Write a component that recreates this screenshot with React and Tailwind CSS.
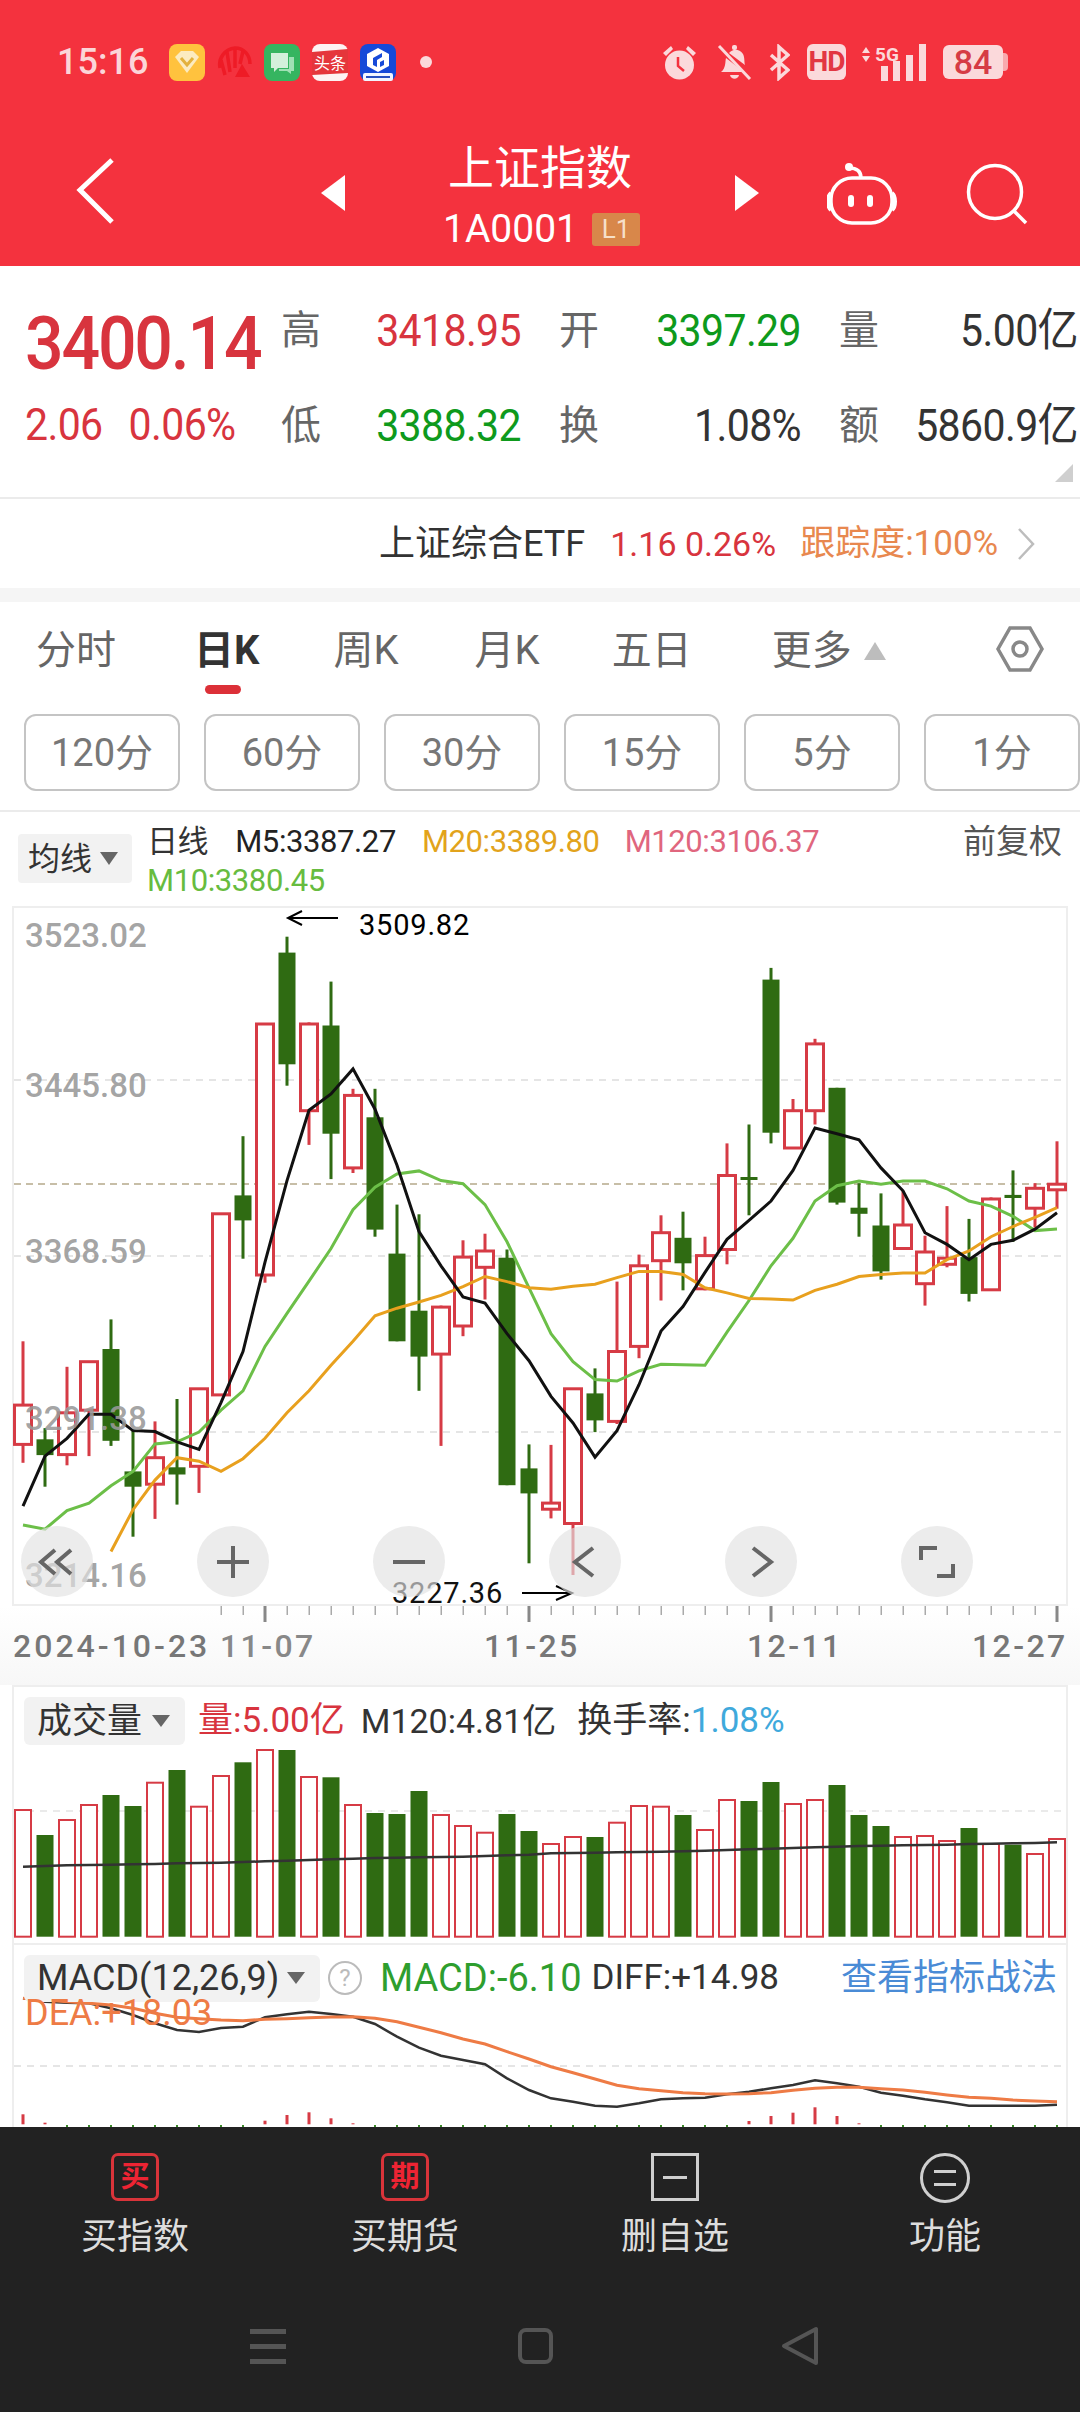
import React from "react";

const X = (i) => 23 + 22 * i;
const Y = (z) => +(900 + z / 1.96).toFixed(1);
const V = (z) => +(1680 + z / 3).toFixed(1);
const RED = "#D63B45";
const GREEN = "#2F6B12";

const candles = [
  ["r",865,990,1067,1103],["g",1035,1057,1088,1150],["r",915,1005,1087,1108],["r",905,905,1000,1090],
  ["g",822,880,1060,1070],["g",1040,1120,1150,1248],["r",1022,1093,1145,1213],["g",978,1112,1126,1185],
  ["r",958,958,1110,1162],["r",615,615,970,970],["g",463,579,628,703],["r",243,243,735,750],
  ["g",72,103,322,364],["r",240,243,413,480],["g",160,246,458,547],["r",370,383,525,535],
  ["g",370,426,646,660],["g",597,693,865,865],["g",616,805,895,962],["r",795,798,890,1070],
  ["r",667,700,835,855],["r",654,688,720,783],["g",685,701,1147,1147],["g",1067,1114,1163,1300],
  ["r",1068,1182,1194,1212],["r",958,958,1222,1323],["g",918,967,1020,1043],["r",748,885,1022,1027],
  ["r",695,717,875,898],["r",618,652,707,785],["g",611,662,712,765],["r",660,697,762,765],
  ["r",477,540,685,714],["g",440,543,547,618],["g",133,156,456,477],["r",390,413,486,486],
  ["r",272,282,413,440],["g",368,368,593,597],["g",555,603,615,660],["g",575,638,728,744],
  ["r",570,637,683,683],["r",658,690,752,795],["r",600,702,714,720],["g",625,700,772,787],
  ["r",583,586,764,764],["g",530,578,584,670],["r",555,565,604,642],["r",473,557,568,605],
];

const m5 = [1188,1090,1055,1008,1008,1040,1042,1062,1077,985,885,710,550,412,380,331,410,520,650,717,778,790,850,903,973,1025,1092,1040,950,845,797,730,665,628,590,530,447,458,470,525,570,652,675,705,675,667,645,613];
const m10 = [1225,1233,1197,1182,1148,1120,1066,1062,1043,1000,962,875,810,747,683,607,563,537,531,550,556,597,670,760,850,905,940,943,923,910,911,912,847,785,717,663,590,560,551,557,551,551,566,590,600,620,648,645];
const m20 = [1277,1195,1137,1093,1100,1120,1095,1055,1005,962,912,865,815,800,788,775,758,738,748,760,763,757,753,740,728,728,734,760,770,781,782,784,765,753,738,734,731,731,705,688,660,640,622,603];

const vols = [
  ["r",390],["g",465],["r",420],["r",375],["g",345],["g",378],["r",308],["g",270],["r",380],["r",288],["g",247],["r",210],
  ["g",210],["r",291],["g",292],["r",375],["g",399],["g",402],["g",333],["r",405],["r",438],["r",458],["g",402],["g",453],
  ["r",492],["r",471],["g",471],["r",428],["r",378],["r",380],["g",405],["r",450],["r",360],["g",363],["g",306],["r",372],
  ["r",360],["g",315],["g",405],["g",438],["r",471],["r",468],["r",483],["g",444],["r",492],["g",494],["r",522],["r",477],
];
const volLine = [560,558,556,555,554,553,552,550,549,548,546,544,542,540,538,536,534,533,532,531,530,528,526,524,520,519,518,517,516,515,514,512,510,508,506,504,502,500,498,497,496,495,494,492,491,490,489,487];

const difLine = [955,965,968,970,985,1005,1030,1050,1056,1044,1040,1012,1003,995,1002,1010,1032,1070,1103,1127,1140,1153,1195,1230,1255,1265,1277,1280,1270,1258,1255,1253,1243,1235,1225,1215,1201,1210,1220,1238,1247,1258,1267,1277,1277,1277,1277,1274];
const deaLine = [955,960,965,970,975,985,1000,1012,1016,1020,1022,1018,1016,1013,1011,1010,1015,1025,1042,1058,1077,1092,1115,1137,1160,1178,1197,1216,1226,1232,1238,1241,1242,1241,1238,1231,1225,1222,1222,1226,1230,1237,1245,1252,1255,1260,1263,1265];
const macdRed = { 0: 1303, 1: 1328, 11: 1322, 12: 1305, 13: 1297, 14: 1315, 15: 1330, 33: 1323, 34: 1308, 35: 1298, 36: 1282, 37: 1308, 38: 1330 };

const pts = (arr, fy, start = 0) => arr.map((z, i) => `${X(i + start)},${fy(z)}`).join(" ");

function Yellow() {
  return (
    <svg width="36" height="37" viewBox="0 0 36 37">
      <rect x="0" y="0" width="36" height="37" rx="8" fill="#FFC23E" />
      <path d="M6 13 L12 7 H24 L30 13 L18 29 Z" fill="#FCEBC0" />
      <path d="M12 14 L18 21 L24 14" fill="none" stroke="#E3B13C" strokeWidth="3" />
    </svg>
  );
}
function Shell() {
  return (
    <svg width="35" height="37" viewBox="0 0 35 37" fill="none" stroke="#EE1B26" strokeWidth="3.5">
      <path d="M3 24 C1 14 8 5 18 4 C27 4 33 11 33 20" />
      <path d="M8 31 L4 16 M13 28 L10 8 M18 24 L18 5 M23 20 L26 7" />
      <path d="M25 20 L33 33 H18 Z" fill="#EE1B26" stroke="none" />
    </svg>
  );
}
function Chat() {
  return (
    <svg width="36" height="37" viewBox="0 0 36 37">
      <rect width="36" height="37" rx="8" fill="#35B560" />
      <path d="M7 9 H24 V24 H14 L10 28 V24 H7 Z" fill="#D3F0DB" />
      <path d="M25 13 H30 V27 H27 V30 L23 27 H15 V25 H25 Z" fill="#9FE0B4" />
    </svg>
  );
}
function Toutiao() {
  return (
    <svg width="36" height="37" viewBox="0 0 36 37">
      <rect width="36" height="37" rx="8" fill="#FDF3F3" />
      <path d="M0 8 L36 5 V29 L0 31 Z" fill="#E5363B" />
      <text x="18" y="25" textAnchor="middle" fontSize="16" fill="#FFF" fontFamily="'Noto Sans CJK SC',sans-serif">头条</text>
    </svg>
  );
}
function Blue() {
  return (
    <svg width="36" height="37" viewBox="0 0 36 37">
      <rect width="36" height="37" rx="8" fill="#1649D8" />
      <path d="M18 4 L29 10 V22 L18 28 L7 22 V10 Z" fill="#FFF" />
      <path d="M22 9 L13 14 V21 L17 23 V16 L22 13 Z M20 18 L24 16 V21 L20 23 Z" fill="#1649D8" />
      <rect x="3" y="29" width="30" height="8" rx="2" fill="#F2F5FF" />
      <rect x="6" y="32" width="24" height="2" fill="#274FC0" />
    </svg>
  );
}

function Alarm() {
  return (
    <svg width="35" height="37" viewBox="0 0 35 37" fill="#FBD9DB">
      <circle cx="17.5" cy="21" r="14.5" />
      <path d="M1 9 L9 2 L11 5 L4 12 Z M34 9 L26 2 L24 5 L31 12 Z" />
      <path d="M16 13 V22 L22 27" fill="none" stroke="#F4323E" strokeWidth="2.5" />
    </svg>
  );
}
function Bell() {
  return (
    <svg width="35" height="37" viewBox="0 0 35 37" fill="#FBD9DB">
      <path d="M4 28 C9 24 8 18 9 14 L27 28 Z M12 9 C15 5 22 4 26 10 C28 14 27 18 28 21 Z" />
      <rect x="15" y="1" width="5" height="5" rx="2" />
      <path d="M13 31 H22 C21 36 14 36 13 31 Z" />
      <path d="M2 2 L33 35" stroke="#FBD9DB" strokeWidth="3" />
    </svg>
  );
}
function Bluetooth() {
  return (
    <svg width="21" height="37" viewBox="0 0 21 37" fill="none" stroke="#FBD9DB" strokeWidth="3.5">
      <path d="M2 11 L19 26 L10 34 V3 L19 11 L2 26" />
    </svg>
  );
}
function Signal() {
  return (
    <svg width="67" height="37" viewBox="0 0 67 37" fill="#FBD9DB">
      <path d="M2 9 L6 3 L10 9 Z M2 12 L6 18 L10 12 Z" />
      <rect x="21" y="22" width="7" height="15" />
      <rect x="33" y="17" width="7" height="20" />
      <rect x="46" y="11" width="7" height="26" />
      <rect x="59" y="0" width="7" height="37" />
      <text x="15" y="17" fontSize="19" fontWeight="700" fontFamily="Roboto,sans-serif">5G</text>
    </svg>
  );
}

function Robot() {
  return (
    <svg width="70" height="65" viewBox="827 160 70 65" fill="none" stroke="#fff" strokeWidth="3.5">
      <rect x="831" y="176" width="61" height="45" rx="21" />
      <path d="M849 166 C856 166 861 169 861 176" />
      <circle cx="849" cy="165" r="4" fill="#fff" stroke="none" />
      <rect x="848" y="193" width="6" height="12" rx="3" fill="#fff" stroke="none" />
      <rect x="867" y="193" width="6" height="12" rx="3" fill="#fff" stroke="none" />
      <path d="M831 191 C827 194 827 205 831 208 M892 191 C896 194 896 205 892 208" strokeWidth="4" />
    </svg>
  );
}

function CandleChart() {
  return (
    <svg className="absolute inset-0" width="1080" height="700" viewBox="0 906 1080 700">
      <g stroke="#DDDDDD" strokeWidth="1.5" strokeDasharray="7 6">
        <line x1="14" x2="1064" y1="1080" y2="1080" />
        <line x1="14" x2="1064" y1="1256" y2="1256" />
        <line x1="14" x2="1064" y1="1432" y2="1432" />
      </g>
      <line x1="14" x2="1064" y1="1184" y2="1184" stroke="#B5A98A" strokeWidth="1.5" strokeDasharray="7 5" />
      {candles.map(([t, wt, bt, bb, wb], i) => {
        const x = X(i);
        if (t === "g") {
          return (
            <g key={i} fill={GREEN}>
              <rect x={x - 1.5} y={Y(wt)} width="3" height={Y(wb) - Y(wt)} />
              <rect x={x - 8.5} y={Y(bt)} width="17" height={Math.max(Y(bb) - Y(bt), 3)} />
            </g>
          );
        }
        return (
          <g key={i}>
            <rect x={x - 1.5} y={Y(wt)} width="3" height={Y(wb) - Y(wt)} fill={RED} />
            <rect x={x - 8.5} y={Y(bt)} width="17" height={Math.max(Y(bb) - Y(bt), 3)} fill="#fff" stroke={RED} strokeWidth="3" />
          </g>
        );
      })}
      <polyline points={pts(m10, Y)} fill="none" stroke="#6CBF48" strokeWidth="3" />
      <polyline points={pts(m20, Y, 4)} fill="none" stroke="#E8A01E" strokeWidth="3" />
      <polyline points={pts(m5, Y)} fill="none" stroke="#111" strokeWidth="3" />
      <g fill="none" stroke="#000" strokeWidth="2">
        <path d="M338 918 H288 M302 911 L288 918 L302 925" />
        <path d="M522 1593 H572 M556 1586 L572 1593 L556 1600" />
      </g>
    </svg>
  );
}

function Circle({ cx, children }) {
  return (
    <div className={`absolute top-[620px] w-[72px] h-[71px] rounded-full bg-[#E2E2E2]/65 flex items-center justify-center ${cx}`}>
      <svg width="44" height="44" viewBox="0 0 44 44" fill="none" stroke="#666" strokeWidth="4">
        {children}
      </svg>
    </div>
  );
}

function AxisLabel({ className, children }) {
  return <span className={`absolute left-[25px] text-[33px] leading-[40px] font-medium text-[#999]/90 ${className}`}>{children}</span>;
}

function Quote({ label, value, color, className = "pr-[38px]" }) {
  return (
    <div className={`flex items-center justify-between ${className}`}>
      <span className="text-[40px] leading-[56px] text-[#666]">{label}</span>
      <span className={`text-[41px] leading-[56px] tracking-[-0.6px] origin-center scale-y-110 ${color}`}>{value}</span>
    </div>
  );
}

const tabClass = "text-[40px] leading-[56px] text-[#666]";

export default function App() {
  return (
    <div className="w-[1080px] h-[2412px] flex flex-col bg-white overflow-hidden font-['Roboto','Noto_Sans_CJK_SC',sans-serif]">
      <header className="h-[266px] shrink-0 bg-[#F4323E] flex flex-col">
        <div className="h-[124px] flex items-center pl-[57px] pr-[72px]">
          <span className="w-[112px] text-[36px] leading-[44px] font-medium text-[#FBD5D8]">15:16</span>
          <div className="flex items-center gap-[12px]">
            <Yellow />
            <Shell />
            <Chat />
            <Toutiao />
            <Blue />
            <span className="ml-[12px] w-[12px] h-[12px] rounded-full bg-[#FBD9DB]" />
          </div>
          <div className="ml-auto flex items-center">
            <Alarm />
            <div className="ml-[20px]"><Bell /></div>
            <div className="ml-[17px]"><Bluetooth /></div>
            <div className="ml-[17px] w-[39px] h-[36px] rounded-[6px] bg-[#FBD9DB] flex items-center justify-center text-[28px] font-bold leading-none text-[#E23642] tracking-[-1px]">HD</div>
            <div className="ml-[14px]"><Signal /></div>
            <div className="ml-[16px] flex items-center">
              <div className="w-[60px] h-[34px] rounded-[6px] bg-[#FBD9DB] flex items-center justify-center text-[34px] font-medium leading-none text-[#D63B45]">84</div>
              <div className="w-[5px] h-[18px] rounded-r-[4px] bg-[#F9A9AE]" />
            </div>
          </div>
        </div>
        <div className="relative flex-1 flex items-center">
          <svg className="ml-[74px] mb-[8px]" width="42" height="68" viewBox="0 0 42 68" fill="none" stroke="#fff" strokeWidth="5">
            <path d="M38 3 L6 33 L38 65" />
          </svg>
          <svg className="ml-[205px] mb-[4px]" width="24" height="36" viewBox="0 0 24 36" fill="#fff">
            <path d="M24 0 V36 L0 18 Z" />
          </svg>
          <div className="w-[390px] flex flex-col items-center">
            <span className="text-[46px] leading-[60px] text-white">上证指数</span>
            <div className="flex items-center gap-[14px] mt-[8px]">
              <span className="ml-[3px] text-[39px] leading-[46px] text-white">1A0001</span>
              <span className="w-[48px] h-[33px] bg-[#D8874A] rounded-[3px] flex items-center justify-center text-[26px] leading-none text-[#F6DFC9]">L1</span>
            </div>
          </div>
          <svg className="mb-[4px]" width="24" height="36" viewBox="0 0 24 36" fill="#fff">
            <path d="M0 0 V36 L24 18 Z" />
          </svg>
          <div className="ml-[68px] mb-[2px]"><Robot /></div>
          <svg className="ml-[69px] mb-[2px]" width="62" height="62" viewBox="0 0 62 62" fill="none" stroke="#fff" strokeWidth="3.5">
            <circle cx="29" cy="29" r="26.5" />
            <path d="M48 48 L60 60" />
          </svg>
        </div>
      </header>

      <section className="relative h-[231px] shrink-0 flex">
        <div className="w-[281px] shrink-0 flex flex-col pl-[25px] pt-[41px]">
          <span className="text-[68px] leading-[74px] font-medium text-[#D8343E] tracking-[-2.2px] origin-center scale-y-110">3400.14</span>
          <div className="flex gap-[26px] mt-[16px] text-[41px] leading-[56px] text-[#D8343E] tracking-[-0.6px]">
            <span className="origin-center scale-y-110">2.06</span>
            <span className="origin-center scale-y-110">0.06%</span>
          </div>
        </div>
        <div className="grid grid-cols-[278px_280px_241px] grid-rows-[95px_95px] pt-[17px]">
          <Quote label="高" value="3418.95" color="text-[#D8343E]" />
          <Quote label="开" value="3397.29" color="text-[#0E9A1C]" />
          <Quote label="量" value="5.00亿" color="text-[#333]" className="pr-[2px]" />
          <Quote label="低" value="3388.32" color="text-[#0E9A1C]" />
          <Quote label="换" value="1.08%" color="text-[#333]" />
          <Quote label="额" value="5860.9亿" color="text-[#333]" className="pr-[2px]" />
        </div>
        <svg className="absolute right-[7px] bottom-[15px]" width="18" height="18" viewBox="0 0 18 18">
          <path d="M18 0 V18 H0 Z" fill="#CFCFCF" />
        </svg>
      </section>

      <div className="h-[91px] shrink-0 border-t-2 border-[#EBEBEB] flex items-center pl-[379px]">
        <span className="text-[36px] leading-[48px] text-[#333]">上证综合ETF</span>
        <span className="ml-[25px] text-[34px] leading-[48px] text-[#D8343E]">1.16 0.26%</span>
        <span className="ml-[24px] text-[35px] leading-[48px] text-[#E8884F]">跟踪度:100%</span>
        <svg className="ml-[19px]" width="18" height="34" viewBox="0 0 18 34" fill="none" stroke="#BDBDBD" strokeWidth="2.5">
          <path d="M2 2 L16 17 L2 32" />
        </svg>
      </div>
      <div className="h-[14px] shrink-0 bg-[#F5F5F5]" />

      <div className="h-[98px] shrink-0 relative flex items-center pl-[36px]">
        <span className={tabClass}>分时</span>
        <span className="ml-[78px] relative text-[40px] leading-[56px] font-bold text-[#333]">
          日K
          <span className="absolute left-[11px] top-[62px] w-[36px] h-[9px] rounded-full bg-[#DC3038]" />
        </span>
        <span className={`ml-[74px] ${tabClass}`}>周K</span>
        <span className={`ml-[76px] ${tabClass}`}>月K</span>
        <span className={`ml-[72px] ${tabClass}`}>五日</span>
        <span className={`ml-[80px] ${tabClass}`}>更多</span>
        <svg className="ml-[12px]" width="22" height="18" viewBox="0 0 22 18"><path d="M11 0 L22 18 H0 Z" fill="#BDBDBD" /></svg>
        <svg className="ml-[110px] mb-[4px]" width="48" height="48" viewBox="0 0 48 48" fill="none" stroke="#888" strokeWidth="3.5">
          <path d="M14 3 H34 L46 24 L34 45 H14 L2 24 Z" />
          <circle cx="24" cy="24" r="7" />
        </svg>
      </div>

      <div className="h-[112px] shrink-0 flex gap-[24px] pl-[24px] pt-[14px] border-b-2 border-[#EBEBEB]">
        {["120分", "60分", "30分", "15分", "5分", "1分"].map((t) => (
          <div key={t} className="w-[156px] h-[77px] shrink-0 rounded-[12px] border-2 border-[#C4C4C4] flex items-center justify-center text-[38px] leading-none text-[#777]">
            {t}
          </div>
        ))}
      </div>

      <div className="h-[94px] shrink-0 relative flex">
        <div className="ml-[18px] mt-[22px] w-[114px] h-[49px] shrink-0 rounded-[4px] bg-[#F2F2F2] flex items-center pl-[10px] gap-[8px]">
          <span className="text-[32px] leading-none text-[#333]">均线</span>
          <svg width="18" height="13" viewBox="0 0 18 13"><path d="M0 0 H18 L9 13 Z" fill="#666" /></svg>
        </div>
        <div className="ml-[15px] pt-[10px] flex flex-col">
          <div className="flex text-[31px] leading-[40px] tracking-[-0.4px]">
            <span className="text-[#333]">日线</span>
            <span className="ml-[27px] text-[#222]">M5:3387.27</span>
            <span className="ml-[26px] text-[#E2A31C]">M20:3389.80</span>
            <span className="ml-[25px] text-[#E0667E]">M120:3106.37</span>
          </div>
          <span className="text-[31px] leading-[38px] tracking-[-0.4px] text-[#67BC3F]">M10:3380.45</span>
        </div>
        <span className="absolute left-[963px] top-[10px] text-[33px] leading-[40px] text-[#555]">前复权</span>
      </div>

      <div className="relative h-[700px] shrink-0">
        <div className="absolute left-[12px] top-0 w-[1056px] h-[700px] border-2 border-[#EEEEEE]" />
        <CandleChart />
        <AxisLabel className="top-[10px]">3523.02</AxisLabel>
        <AxisLabel className="top-[160px]">3445.80</AxisLabel>
        <AxisLabel className="top-[326px]">3368.59</AxisLabel>
        <AxisLabel className="top-[493px]">3291.38</AxisLabel>
        <AxisLabel className="top-[650px]">3214.16</AxisLabel>
        <span className="absolute left-[359px] top-[0px] text-[29px] leading-[38px] tracking-[0.8px] text-black">3509.82</span>
        <span className="absolute left-[392px] top-[668px] text-[29px] leading-[38px] tracking-[0.8px] text-[#111]">3227.36</span>
        <Circle cx="left-[21px]">
          <path d="M20 10 L6 22 L20 34 M36 10 L22 22 L36 34" />
        </Circle>
        <Circle cx="left-[197px]">
          <path d="M6 22 H38 M22 6 V38" />
        </Circle>
        <Circle cx="left-[373px]">
          <path d="M6 22 H38" />
        </Circle>
        <Circle cx="left-[549px]">
          <path d="M30 8 L12 22 L30 36" />
        </Circle>
        <Circle cx="left-[725px]">
          <path d="M14 8 L32 22 L14 36" />
        </Circle>
        <Circle cx="left-[901px]">
          <path d="M22 8 H6 V20 M22 36 H38 V24" />
        </Circle>
      </div>

      <div className="relative h-[79px] shrink-0 bg-linear-to-b from-white to-[#F7F7F7]">
        <svg className="absolute left-0 top-0" width="1080" height="18" viewBox="0 1606 1080 18">
          {candles.map((_, i) =>
            i < 9 ? null : [11, 23, 34, 47].includes(i) ? (
              <rect key={i} x={X(i) - 1.5} y="1606" width="3" height="16" fill="#888" />
            ) : (
              <rect key={i} x={X(i) - 0.5} y="1606" width="1.5" height="9" fill="#AAA" />
            )
          )}
        </svg>
        <span className="absolute left-[13px] top-[20px] text-[32px] leading-[40px] font-medium text-[#777] tracking-[3px]">2024-10-23</span>
        <span className="absolute left-[220px] top-[20px] text-[32px] leading-[40px] font-medium text-[#888] tracking-[2.4px]">11-07</span>
        <span className="absolute left-[484px] top-[20px] text-[32px] leading-[40px] font-medium text-[#777] tracking-[2.4px]">11-25</span>
        <span className="absolute left-[747px] top-[20px] text-[32px] leading-[40px] font-medium text-[#777] tracking-[2.4px]">12-11</span>
        <span className="absolute left-[972px] top-[20px] text-[32px] leading-[40px] font-medium text-[#777] tracking-[2.4px]">12-27</span>
      </div>

      <div className="relative h-[260px] shrink-0 ml-[12px] w-[1056px] border-x-2 border-y-2 border-[#EEEEEE]">
        <svg className="absolute left-[-14px] top-[-2px]" width="1080" height="260" viewBox="0 1685 1080 260">
          <line x1="14" x2="1064" y1="1811" y2="1811" stroke="#E4E4E4" strokeWidth="1.5" strokeDasharray="7 6" />
          {vols.map(([t, z], i) =>
            t === "g" ? (
              <rect key={i} x={X(i) - 8.5} y={V(z)} width="17" height={V(770) - V(z)} fill={GREEN} />
            ) : (
              <rect key={i} x={X(i) - 8} y={V(z)} width="16" height={V(770) - V(z)} fill="#fff" stroke={RED} strokeWidth="2" />
            )
          )}
          <polyline points={pts(volLine, V)} fill="none" stroke="#333" strokeWidth="2.5" />
        </svg>
        <div className="relative flex items-center pl-[10px] pt-[10px]">
          <div className="w-[161px] h-[48px] rounded-[6px] bg-[#F2F2F2] flex items-center pl-[13px] gap-[10px]">
            <span className="text-[35px] leading-none text-[#333]">成交量</span>
            <svg width="18" height="12" viewBox="0 0 18 12"><path d="M0 0 H18 L9 12 Z" fill="#666" /></svg>
          </div>
          <span className="ml-[13px] text-[35px] leading-[48px] text-[#D8343E]">量:5.00亿</span>
          <span className="ml-[16px] text-[34px] leading-[48px] text-[#333]">M120:4.81亿</span>
          <span className="ml-[21px] text-[35px] leading-[48px] text-[#333]">换手率:<span className="text-[#3FA9DC]">1.08%</span></span>
        </div>
      </div>

      <div className="relative flex-1 ml-[12px] w-[1056px] border-x-2 border-[#EEEEEE] overflow-hidden">
        <svg className="absolute left-[-14px] top-0" width="1080" height="182" viewBox="0 1945 1080 182">
          <line x1="14" x2="1064" y1="2066" y2="2066" stroke="#DDD" strokeWidth="1.5" strokeDasharray="7 6" />
          {candles.map((_, i) =>
            macdRed[i] ? (
              <rect key={i} x={X(i) - 1.5} y={V(macdRed[i])} width="3" height={V(1333) - V(macdRed[i])} fill={RED} />
            ) : (
              <rect key={i} x={X(i) - 1} y={V(1335)} width="2" height="3" fill="#3B8A2A" />
            )
          )}
          <polyline points={pts(difLine, V)} fill="none" stroke="#333" strokeWidth="2.5" />
          <polyline points={pts(deaLine, V)} fill="none" stroke="#EE7B45" strokeWidth="3" />
        </svg>
        <div className="relative flex items-center pl-[10px] pt-[9px]">
          <div className="w-[296px] h-[47px] rounded-[6px] bg-[#F2F2F2] flex items-center pl-[13px] gap-[8px]">
            <span className="text-[36px] leading-none text-[#333]">MACD(12,26,9)</span>
            <svg width="18" height="12" viewBox="0 0 18 12"><path d="M0 0 H18 L9 12 Z" fill="#666" /></svg>
          </div>
          <div className="ml-[8px] w-[34px] h-[34px] rounded-full border-2 border-[#BBB] flex items-center justify-center text-[24px] leading-none text-[#BBB]">?</div>
          <span className="ml-[18px] text-[38px] leading-[48px] text-[#2E9E2E]">MACD:-6.10</span>
          <span className="ml-[10px] text-[35px] leading-[48px] text-[#333]">DIFF:+14.98</span>
          <span className="ml-[62px] text-[36px] leading-[48px] text-[#4A8BD6]">查看指标战法</span>
        </div>
        <span className="absolute left-[11px] top-[46px] text-[36px] leading-[44px] text-[#EE7B45]">DEA:+18.03</span>
      </div>

      <footer className="h-[285px] shrink-0 bg-[#222222] flex flex-col">
        <div className="grid grid-cols-4 pt-[26px]">
          <div className="flex flex-col items-center">
            <div className="w-[48px] h-[48px] rounded-[7px] border-[3px] border-[#D9343A] flex items-center justify-center text-[29px] leading-none font-bold text-[#EE2433]">买</div>
            <span className="mt-[12px] text-[36px] leading-[48px] text-[#DDD]">买指数</span>
          </div>
          <div className="flex flex-col items-center">
            <div className="w-[48px] h-[48px] rounded-[7px] border-[3px] border-[#D9343A] flex items-center justify-center text-[29px] leading-none font-bold text-[#EE2433]">期</div>
            <span className="mt-[12px] text-[36px] leading-[48px] text-[#DDD]">买期货</span>
          </div>
          <div className="flex flex-col items-center">
            <div className="w-[48px] h-[48px] border-[3px] border-[#CFCFCF] flex items-center justify-center">
              <div className="w-[24px] h-[3px] bg-[#CFCFCF]" />
            </div>
            <span className="mt-[12px] text-[36px] leading-[48px] text-[#DDD]">删自选</span>
          </div>
          <div className="flex flex-col items-center">
            <div className="w-[50px] h-[50px] rounded-full border-[3px] border-[#CFCFCF] flex flex-col items-center justify-center gap-[10px]">
              <div className="w-[22px] h-[3px] bg-[#CFCFCF]" />
              <div className="w-[22px] h-[3px] bg-[#CFCFCF]" />
            </div>
            <span className="mt-[10px] text-[36px] leading-[48px] text-[#DDD]">功能</span>
          </div>
        </div>
        <div className="flex items-center mt-[65px] pl-[250px]">
          <div className="w-[36px] flex flex-col gap-[10px]">
            <div className="h-[5px] bg-[#555]" />
            <div className="h-[5px] bg-[#555]" />
            <div className="h-[5px] bg-[#555]" />
          </div>
          <div className="ml-[232px] w-[35px] h-[36px] rounded-[8px] border-[4px] border-[#555]" />
          <svg className="ml-[228px]" width="38" height="40" viewBox="0 0 38 40" fill="none" stroke="#555" strokeWidth="4" strokeLinejoin="round">
            <path d="M35 3 V37 L3 20 Z" />
          </svg>
        </div>
      </footer>
    </div>
  );
}
